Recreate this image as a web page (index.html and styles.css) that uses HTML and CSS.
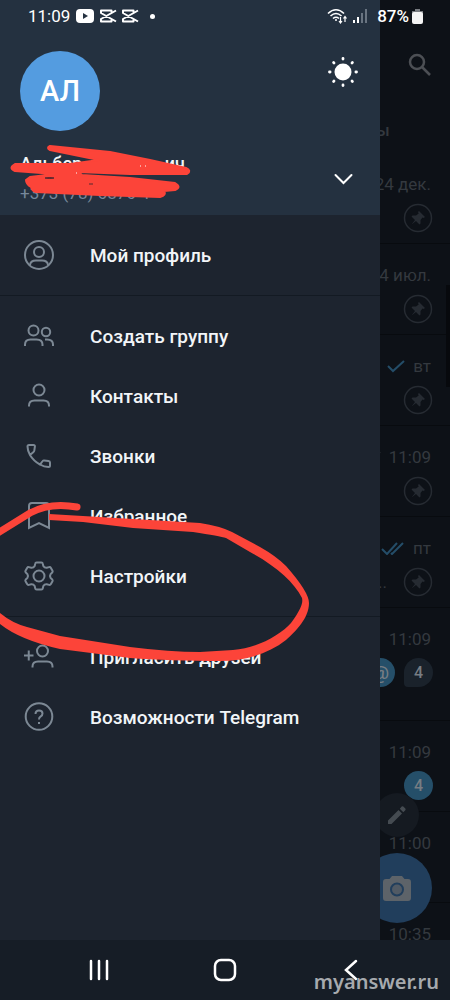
FILE: index.html
```html
<!DOCTYPE html>
<html lang="ru">
<head>
<meta charset="utf-8">
<meta name="viewport" content="width=device-width, initial-scale=1">
<title>Telegram</title>
<link rel="stylesheet" href="styles.css">
</head>
<body>
<svg class="defs" aria-hidden="true">
  <symbol id="capcut" viewBox="0 0 18 14"><path d="M12.500 4V1.500H2V4L17 12.500M12.500 10V12.500H2V10L17 1.500" fill="none" stroke="currentColor" stroke-width="2" stroke-linejoin="round"/></symbol>
  <symbol id="pin" viewBox="0 0 30 30"><circle cx="15" cy="15" r="13.500" fill="none" stroke="currentColor" stroke-width="1.500"/><path d="M16 8 22 14 20.500 15 19.500 14.500 17.500 17 17.500 20.500 16.500 21.500 13 18 8.500 21.500 12 17 8.500 13.500 9.500 12.500 13 12.500 15.700 10.500 15 9Z" fill="currentColor"/></symbol>
</svg>
<div class="screen">
  <div class="statusbar">
    <span class="clock">11:09</span>
    <svg class="yt" viewBox="0 0 18 14"><rect width="18" height="14" rx="4" fill="#fff"/><path d="M7 4v6l5-3z" fill="#243140"/></svg>
    <svg class="cc"><use href="#capcut"/></svg>
    <svg class="cc"><use href="#capcut"/></svg>
    <span class="dot"></span>
    <svg class="wifi" viewBox="0 0 20 16" fill="none" stroke="#fff" stroke-width="1.600"><path d="M1 5.500Q9 -2 17 5.500M3.500 8Q9 3 14.500 8M6 10.500Q9 8 12 10.500"/><circle cx="9" cy="12" r="1" fill="#fff" stroke="none"/><path d="M13.500 9v5.500M12 13l1.500 2 1.500-2M18 14V9M16.500 10.500 18 8.500l1.500 2" stroke-width="1.200"/></svg>
    <svg class="signal" viewBox="0 0 14 14"><path d="M0 11h2v3H0zM4 8h2v6H4z" fill="#fff"/><path d="M8 4h2v10H8zM12 0h2v14h-2z" fill="#697481"/></svg>
    <span class="percent">87%</span>
    <svg class="battery" viewBox="0 0 11 15"><path d="M3 0h5v2h3v3H0V2h3z" fill="#777b80"/><rect y="3" width="11" height="12" rx="2" fill="#f4f4f4"/></svg>
  </div>

  <aside class="drawer">
    <header class="account">
      <div class="avatar">АЛ</div>
      <button class="icon-button theme" aria-label="Дневная тема"><svg viewBox="0 0 32 32" width="32" height="32" fill="#fff"><circle cx="16" cy="16" r="8.500"/><g stroke="#fff" stroke-width="2.800" stroke-linecap="round"><path d="M16 2.500v.6M16 28.900v.6M2.500 16h.6M28.900 16h.6M6.600 6.600l.4.400M25 25l.4.400M25.400 6.600l-.4.400M7 25l-.4.400"/></g></svg></button>
      <div class="identity">
        <div class="name"><span>Альбер</span><span>ич</span></div>
        <div class="phone">+373 (78) 6876 4</div>
      </div>
      <button class="icon-button accounts" aria-label="Аккаунты"><svg viewBox="0 0 32 32" width="32" height="32" fill="none" stroke="#fff" stroke-width="2" stroke-linecap="round"><path d="m8.500 12 8 8 8-8"/></svg></button>
    </header>
    <nav class="menu">
      <div class="group">
        <a class="item" href="#"><svg viewBox="0 0 36 36"><circle cx="18" cy="18" r="14"/><circle cx="18" cy="15" r="5"/><path d="M9 28Q9.500 23.500 15 23.500h6Q26.500 23.500 27 28"/></svg>Мой профиль</a>
      </div>
      <div class="group">
        <a class="item" href="#"><svg viewBox="0 0 36 36"><circle cx="12.500" cy="12.500" r="5"/><circle cx="25" cy="14" r="4.200"/><path d="M4 28v-1.500Q4 21.500 9.500 21.500h6Q21.500 21.500 21.500 26.500V28M24 21.500h2Q32 21.500 32 26.500V28"/></svg>Создать группу</a>
        <a class="item" href="#"><svg viewBox="0 0 36 36"><circle cx="18" cy="12" r="5.500"/><path d="M8 28.500V27.500Q8 22.500 13.500 22.500h9Q28 22.500 28 27.500v1"/></svg>Контакты</a>
        <a class="item" href="#"><svg viewBox="0 0 36 36"><path d="M9 17Q6.500 12.500 6.500 8.500 6.500 7 8 7H12.500Q14 7 13.900 8.500L13.300 12.500Q13.200 13.500 12.500 14ZQ12.500 23 19 26.500L21.700 23Q22.200 22.300 23.200 22.400L27.500 23Q29 23.200 29 24.500V27.500Q29 29 27.500 29 23 29 19 26.500"/></svg>Звонки</a>
        <a class="item" href="#"><svg viewBox="0 0 36 36"><path d="M8 30V8Q8 5 11 5H25Q28 5 28 8V30L18 25Z"/></svg>Избранное</a>
        <a class="item" href="#"><svg viewBox="0 0 36 36"><circle cx="18" cy="18" r="5.500"/><path d="M15.600 4.500h4.800q1.200 0 1.400 1.200l.5 2.200q1.200 2 3.500 1.800l2.300-.6q1.200-.3 1.800.8l1.600 2.800q.5 1-.3 1.900l-1.600 1.500q-1.200 1.900 0 3.800l1.600 1.500q.8.900.3 1.900l-1.600 2.800q-.6 1.100-1.800.8l-2.300-.6q-2.300-.2-3.500 1.800l-.5 2.200q-.2 1.200-1.400 1.200h-4.800q-1.200 0-1.400-1.200l-.5-2.200q-1.200-2-3.500-1.800l-2.300.6q-1.200.3-1.800-.8l-1.600-2.800q-.5-1 .3-1.900l1.600-1.500q1.200-1.900 0-3.800l-1.600-1.500q-.8-.9-.3-1.900l1.600-2.800q.6-1.100 1.800-.8l2.300.6q2.300.2 3.500-1.800l.5-2.200q.2-1.200 1.400-1.200Z"/></svg>Настройки</a>
      </div>
      <div class="group">
        <a class="item" href="#"><svg viewBox="0 0 36 36"><circle cx="21.500" cy="12" r="5.500"/><path d="M11.500 28.500V27.500Q11.500 22.500 17 22.500h9Q31.500 22.500 31.500 27.500v1M3 16.500h9.500M7.750 11.500v10"/></svg>Пригласить друзей</a>
        <a class="item" href="#"><svg viewBox="0 0 36 36"><circle cx="18" cy="17.500" r="13.300"/><path d="M14.500 15Q14.500 11.500 18 11.500t3.500 3Q21.500 16.500 19.500 17.700 18 18.700 18 20.500M18 23v2"/></svg>Возможности Telegram</a>
      </div>
    </nav>
  </aside>

  <main class="chats">
    <div class="search"><svg viewBox="0 0 24 24" width="24" height="24" fill="none" stroke="currentColor" stroke-width="2.500"><circle cx="9" cy="9" r="7"/><path d="m14 14 8 8"/></svg></div>
    <div class="tab">ы</div>
    <div class="chat"><time>24 дек.</time><svg class="pin"><use href="#pin"/></svg></div>
    <div class="chat"><time>4 июл.</time><svg class="pin"><use href="#pin"/></svg></div>
    <div class="chat"><time><svg class="tick" viewBox="0 0 18 14"><path d="m1 7 5 5L17 2"/></svg>вт</time><svg class="pin"><use href="#pin"/></svg></div>
    <div class="chat"><time><svg class="tick faded" viewBox="0 0 18 14"><path d="m1 7 5 5L17 2"/></svg>11:09</time><svg class="pin"><use href="#pin"/></svg></div>
    <div class="chat"><time><svg class="tick double" viewBox="0 0 24 14"><path d="m1 8 5 5L16 2M10 12l1 1L22 2"/></svg>пт</time><div class="meta"><span class="snippet">...</span><svg class="pin"><use href="#pin"/></svg></div></div>
    <div class="chat tall"><time>11:09</time><div class="meta"><span class="badge blue mention">@</span><span class="badge topic">4</span></div></div>
    <div class="chat"><time>11:09</time><span class="badge blue">4</span></div>
    <div class="chat"><time>11:00</time></div>
    <div class="chat last"><time>10:35</time></div>
    <div class="scrollbar"></div>
    <div class="fabs">
      <div class="fab edit"><svg viewBox="0 0 24 24" width="24" height="24" fill="currentColor"><path d="M3 17.500V21h3.500L17 10.500 13.500 7zM14.800 5.700l3.500 3.500 2-2q.8-.8 0-1.600l-2-2q-.8-.8-1.600 0z"/></svg></div>
      <div class="fab camera"><svg viewBox="0 0 30 26" width="30" height="26"><path d="M10 1h10l2.500 3H26q3 0 3 3v16q0 3-3 3H4q-3 0-3-3V7q0-3 3-3h3.500z" fill="#5d6369"/><circle cx="15" cy="14.500" r="6" fill="#515a64" stroke="#213e5c" stroke-width="2"/></svg></div>
    </div>
  </main>
</div>

<footer class="navbar">
  <button aria-label="Недавние"><svg viewBox="0 0 24 24" width="24" height="24" stroke="#fff" stroke-width="2.500" stroke-linecap="round"><path d="M4 3v18M12 3v18M20 3v18"/></svg></button>
  <button aria-label="Домой"><svg viewBox="0 0 24 24" width="24" height="24" fill="none" stroke="#fff" stroke-width="2.500"><rect x="2" y="2" width="20" height="20" rx="6"/></svg></button>
  <button aria-label="Назад"><svg viewBox="0 0 24 24" width="24" height="24" fill="none" stroke="#fff" stroke-width="2.500" stroke-linecap="round"><path d="M17 3 7 12l10 9"/></svg></button>
  <span class="watermark">myanswer.ru</span>
</footer>

<svg class="marker" viewBox="0 0 450 1000" width="450" height="1000" aria-hidden="true">
  <g fill="#fc4439" stroke="#fc4439" stroke-linejoin="round" stroke-linecap="round">
    <path stroke-width="2" d="M50 146 110 152 150 160 186 168Q192 171 187 174L130 174 78 172 82 175 130 178 175 183Q182 187 175 190L164 191Q167 195 160 197L100 195 36 192Q32 191 31 187 26 184 26 180L30 177 55 174 15 171Q8 168 15 164L70 164 99 160 50 150Q46 148 50 146Z"/>
    <path fill="none" stroke-width="7" d="M77 507Q50 502 30 513L-4 534"/>
    <path stroke="none" d="M49 514 83 516 133 519 200 523Q220 526 232 532L260 547Q276 556 286 566 309 592 309 603C309 618 296 631 286 640 268 654 245 661 220 661 190 661 155 660 130 658L60 649Q20 640 0 624V613Q12 623 27 627L60 636 130 647Q170 652 200 652L233 650C258 648 280 635 291 623 302 608 303 602 302 598 294 582 276 566 250 552L226 538Q220 536 193 532L133 528 83 522 49 520Z"/>
  </g>
  <path d="M45 178q5-1 9 0-4 1-9 0M89 184h4" fill="#59282f" stroke="#59282f"/>
  <path d="M140 166h1M145 166h1M76 173h1" stroke="#fff" stroke-width="1"/>
</svg>
</body>
</html>
```

FILE: styles.css
```css
* {
  box-sizing: border-box;
}

body {
  margin: 0;
  min-height: 100vh;
  display: flex;
  flex-direction: column;
  position: relative;
  overflow-x: hidden;
  background: #161d26;
  color: #f2f5f8;
  font-family: Roboto, "Noto Sans", sans-serif;
}

button {
  padding: 0;
  border: 0;
  background: none;
  color: inherit;
  display: grid;
  place-items: center;
}

.defs {
  position: absolute;
  width: 0;
  height: 0;
}

.screen {
  flex: 1;
  display: flex;
  position: relative;
}

/* Status bar */
.statusbar {
  position: absolute;
  inset: 0 0 auto 0;
  z-index: 2;
  height: 32px;
  padding: 0 27px 0 28px;
  display: flex;
  align-items: center;
  color: #fff;
  font-size: 17px;
}

.yt {
  width: 18px;
  height: 14px;
  margin: 0 5px 0 6px;
}

.cc {
  width: 18px;
  height: 14px;
  margin-right: 4px;
}

.dot {
  width: 5px;
  height: 5px;
  margin-left: 7px;
  border-radius: 50%;
  background: #fff;
}

.wifi {
  width: 20px;
  height: 16px;
  margin-left: auto;
}

.signal {
  width: 14px;
  height: 14px;
  margin: 0 10px 0 6px;
}

.percent {
  font-weight: 500;
}

.battery {
  width: 11px;
  height: 15px;
  margin-left: 3px;
}

/* Drawer */
.drawer {
  flex: 1;
  background: #1d242f;
}

.account {
  padding: 51px 21px 11px 20px;
  display: grid;
  grid-template-columns: 1fr 32px;
  row-gap: 23px;
  background: #243140;
}

.avatar {
  width: 80px;
  height: 80px;
  border-radius: 50%;
  display: grid;
  place-items: center;
  background: #549ce0;
  color: #fff;
  font-size: 29px;
  font-weight: 500;
}

.icon-button {
  width: 32px;
}

.theme {
  height: 42px;
}

.accounts {
  height: 50px;
}

.name {
  width: 165px;
  display: flex;
  justify-content: space-between;
  font-size: 18px;
  font-weight: 500;
  line-height: 20px;
}

.phone {
  padding-top: 8px;
  color: #77889b;
  font-size: 17px;
  line-height: 22px;
}

.group {
  padding: 10px 0;
}

.group + .group {
  border-top: 1px solid #131a23;
}

.item {
  height: 60px;
  padding-left: 21px;
  display: flex;
  align-items: center;
  gap: 33px;
  color: inherit;
  font-size: 19px;
  font-weight: 500;
  text-decoration: none;
}

.item svg {
  width: 36px;
  height: 36px;
  fill: none;
  stroke: #7c8894;
  stroke-width: 2;
}

/* Dimmed chat list */
.chats {
  width: 70px;
  position: relative;
  overflow: hidden;
  background: #0d1117;
  color: #34393f;
}

.search {
  height: 77px;
  padding: 53px 0 0 28px;
  color: #4c4f54;
}

.tab {
  height: 76px;
  margin-left: -4px;
  padding-top: 42px;
  font-size: 17px;
  font-weight: 500;
  line-height: 22px;
}

.chat {
  height: 91px;
  padding: 19px 17px 0 0;
  display: flex;
  flex-direction: column;
  align-items: flex-end;
  gap: 7px;
  border-bottom: 1px solid #080b0f;
}

.chat.tall {
  height: 113px;
}

.chat.last {
  height: 36px;
  border: 0;
}

.chat time {
  padding-right: 2px;
  display: flex;
  align-items: center;
  gap: 8px;
  font-size: 17px;
  line-height: 24px;
  white-space: nowrap;
}

.pin {
  width: 30px;
  height: 30px;
  flex: none;
  color: #262b32;
}

.tick {
  width: 18px;
  height: 14px;
  fill: none;
  stroke: #244d68;
  stroke-width: 2;
}

.tick.double {
  width: 24px;
}

.tick.faded {
  stroke: #34393f;
}

.meta {
  display: flex;
  align-items: center;
  gap: 9px;
}

.snippet {
  padding-right: 7px;
  font-size: 17px;
}

.badge {
  width: 29px;
  height: 29px;
  flex: none;
  border-radius: 50%;
  display: grid;
  place-items: center;
  color: #777d83;
  font-size: 16px;
  font-weight: 500;
}

.badge.blue {
  background: #254f69;
}

.badge.mention {
  font-size: 19px;
}

.badge.topic {
  border-bottom-left-radius: 4px;
  background: #1a222b;
}

.scrollbar {
  position: absolute;
  top: 285px;
  right: 0;
  width: 4px;
  height: 102px;
  background: #07090d;
}

.fabs {
  position: absolute;
  bottom: 17px;
  left: -18px;
  display: flex;
  flex-direction: column;
  align-items: center;
  gap: 16px;
}

.fab {
  border-radius: 50%;
  display: grid;
  place-items: center;
}

.edit {
  width: 44px;
  height: 44px;
  background: #151a21;
  color: #454b51;
}

.camera {
  width: 70px;
  height: 70px;
  background: #213e5c;
}

/* System navigation */
.navbar {
  height: 60px;
  padding: 0 36px;
  display: grid;
  grid-template-columns: repeat(3, 1fr);
  position: relative;
  background: #161d26;
}

.watermark {
  position: absolute;
  right: 11px;
  bottom: 5px;
  color: #a6aaae;
  font-family: "Noto Sans", sans-serif;
  font-size: 20px;
  font-weight: 600;
  line-height: 26px;
}

.marker {
  position: absolute;
  top: 0;
  left: 0;
  z-index: 3;
  pointer-events: none;
}
```
